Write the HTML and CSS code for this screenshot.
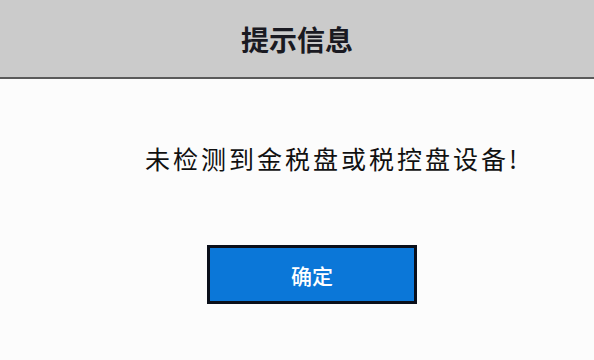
FILE: index.html
```html
<!DOCTYPE html>
<html lang="zh-CN">
<head>
<meta charset="utf-8">
<link rel="stylesheet" href="styles.css">
</head>
<body>
<div class="dialog">
  <div class="header">提示信息</div>
  <div class="body">
    <p class="message">未检测到金税盘或税控盘设备!</p>
    <div class="actions">
      <button class="ok">确定</button>
    </div>
  </div>
</div>
</body>
</html>
```
FILE: styles.css
```css
html, body {
  margin: 0;
  padding: 0;
  background: #fcfcfc;
  font-family: "Noto Sans CJK SC", "Noto Sans", sans-serif;
}
.dialog {
  width: 594px;
  height: 360px;
  display: flex;
  flex-direction: column;
}
.header {
  height: 79px;
  box-sizing: border-box;
  background: #cbcbcb;
  border-bottom: 2px solid #5a5a5a;
  display: flex;
  align-items: center;
  justify-content: center;
  font-size: 28px;
  font-weight: bold;
  color: #1a1a22;
}
.body {
  flex: 1;
  display: flex;
  flex-direction: column;
}
.message {
  margin: 63px 0 0 145px;
  font-size: 25px;
  line-height: 32px;
  letter-spacing: 3px;
  color: #111;
}
.actions {
  display: flex;
  margin-top: 71px;
  padding-left: 207px;
}
.ok {
  width: 210px;
  height: 59px;
  box-sizing: border-box;
  background: #0b77d8;
  border: 3px solid #0a0f1a;
  color: #fff;
  font-family: "Noto Sans CJK SC", sans-serif;
  font-size: 21px;
  font-weight: 500;
  padding: 0;
}
```
